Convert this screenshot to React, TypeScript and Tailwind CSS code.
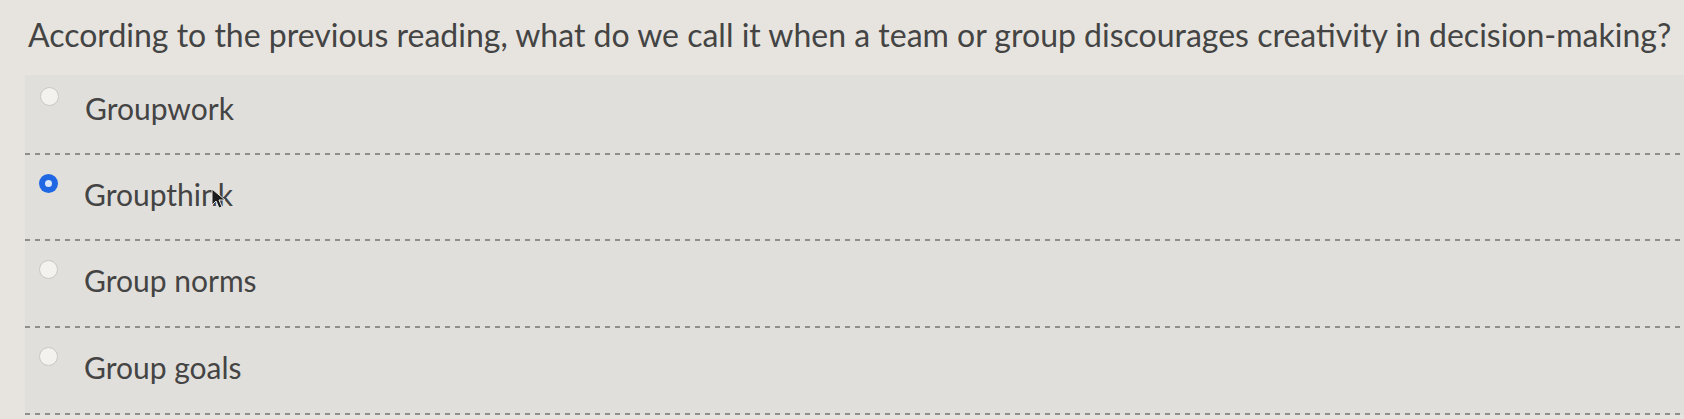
import { useState } from "react";

const options = ["Groupwork", "Groupthink", "Group norms", "Group goals"];

// row heights tuned so the dashed rules land where they do in the shot
const rowClass = [
  "flex h-[78px] cursor-pointer items-start",
  "flex h-[84px] cursor-pointer items-start",
  "flex h-[85px] cursor-pointer items-start",
  "flex h-[85px] cursor-pointer items-start",
];

function Radio({ checked }: { checked: boolean }) {
  if (checked) {
    return (
      <span className="flex h-[19px] w-[19px] shrink-0 items-center justify-center rounded-full bg-[#1f67e3]">
        <span className="block h-[7px] w-[7px] rounded-full bg-[#d9e6fb]" />
      </span>
    );
  }
  return (
    <span className="block h-[19px] w-[19px] shrink-0 rounded-full border border-[#cac8c4] bg-[#f3f2ef]" />
  );
}

function Dashes() {
  return (
    <div className="h-[2px] w-full bg-[repeating-linear-gradient(to_right,#8f8e8b_0px,#8f8e8b_5px,transparent_5px,transparent_10px)]" />
  );
}

export default function App() {
  const [selected, setSelected] = useState(1);

  return (
    <div className="relative h-[419px] overflow-hidden bg-[#e7e4df] font-['Lato','Liberation_Sans',sans-serif] text-[#444444]">
      <h1 className="h-[75px] whitespace-nowrap pl-[28px] pt-[16px] text-[32px] leading-[38px] font-normal">
        According to the previous reading, what do we call it when a team or group discourages creativity in decision-making?
      </h1>

      <div className="ml-[25px] bg-[#e1dfdb]">
        {options.map((label, i) => (
          <div key={label}>
            <label onClick={() => setSelected(i)} className={rowClass[i]}>
              <span className={i === 0 ? "ml-[15px] mt-[12px]" : "ml-[14px] mt-[19px]"}>
                <Radio checked={selected === i} />
              </span>
              <span
                className={
                  i === 0
                    ? "ml-[26px] mt-[15px] text-[30px] leading-[36px]"
                    : "ml-[26px] mt-[21px] text-[30px] leading-[36px]"
                }
              >
                {label}
              </span>
            </label>
            <Dashes />
          </div>
        ))}
      </div>

      {/* mouse pointer caught in the shot */}
      <svg
        className="absolute left-[211px] top-[188px]"
        width="16"
        height="22"
        viewBox="0 0 16 22"
      >
        <path d="M1 1 L1 17 L5 13 L8 20 L11 19 L8 12 L14 12 Z" fill="#1c1c1c" stroke="#e8e6e2" strokeWidth="1" />
      </svg>
    </div>
  );
}
